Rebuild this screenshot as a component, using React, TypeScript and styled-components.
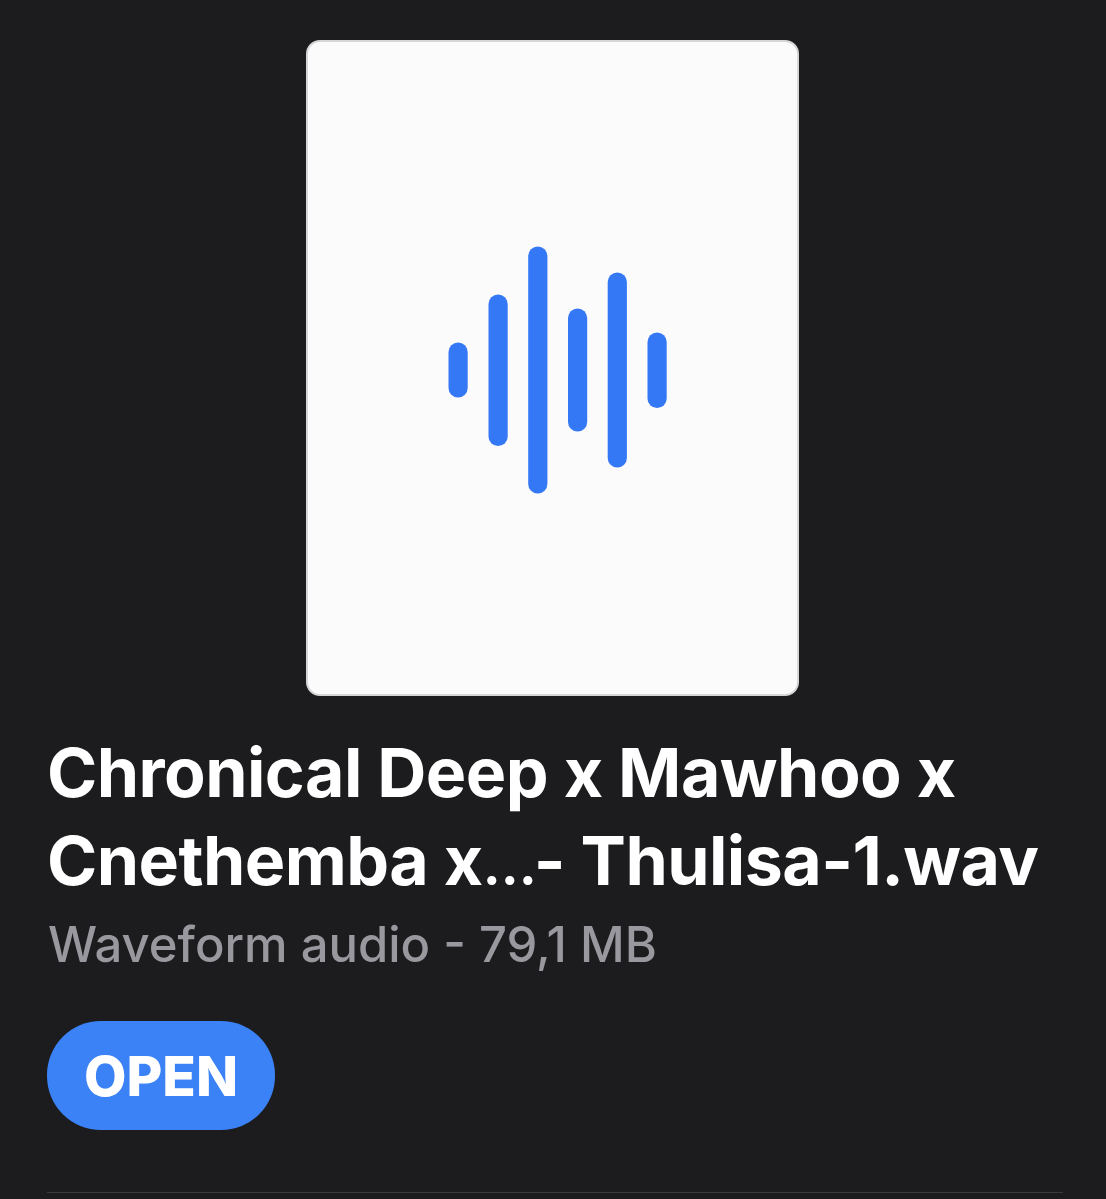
import React from "react";
import styled, { createGlobalStyle } from "styled-components";

const Global = createGlobalStyle`
  html, body { margin: 0; padding: 0; background: #1c1c1e; }
  body { font-family: Inter, "Liberation Sans", sans-serif; }
`;

const Page = styled.main`
  width: 1106px;
  height: 1199px;
  overflow: hidden;
  box-sizing: border-box;
  padding: 40px 43px 0 47px;
  display: flex;
  flex-direction: column;
`;

const Preview = styled.div`
  align-self: flex-start;
  margin-left: 259px;
  width: 493px;
  height: 656px;
  box-sizing: border-box;
  padding: 3px 0 0 8px;
  background: #fbfbfc;
  border: 2px solid #d6d6d8;
  border-radius: 14px;
  display: flex;
  align-items: center;
  justify-content: center;
`;

const Title = styled.h1`
  margin: 32px 0 0 0;
  font-size: 68px;
  line-height: 88px;
  font-weight: 700;
  color: #ffffff;
  letter-spacing: -0.55px;
  white-space: nowrap;
`;

const Ellipsis = styled.span`
  font-size: 54px;
  line-height: 0;
  letter-spacing: -3px;
`;

const Meta = styled.p`
  margin: 12px 0 0 1px;
  font-size: 49px;
  line-height: 58px;
  font-weight: 500;
  color: #98989e;
`;

const OpenButton = styled.button`
  align-self: flex-start;
  margin-top: 47px;
  width: 228px;
  height: 109px;
  border: 0;
  padding: 0;
  border-radius: 54px;
  background: #3b82f6;
  color: #fff;
  font-family: inherit;
  font-size: 55px;
  font-weight: 800;
`;

const Divider = styled.hr`
  margin: 62px 0 0 0;
  border: 0;
  height: 1px;
  background: #3a3a3c;
`;

const bars = [
  { x: 448.5, y: 342, h: 55 },
  { x: 488.5, y: 294, h: 151.5 },
  { x: 528.2, y: 246, h: 247 },
  { x: 568, y: 308, h: 123 },
  { x: 607.7, y: 272, h: 195 },
  { x: 647.5, y: 332, h: 75.5 },
];

function Waveform() {
  return (
    <svg width="220" height="248" viewBox="447 245.5 220 248" fill="#3478f6" aria-hidden="true">
      {bars.map((b) => (
        <rect key={b.x} x={b.x} y={b.y} width="19.2" height={b.h} rx="9.6" />
      ))}
    </svg>
  );
}

export default function App() {
  return (
    <>
      <Global />
      <Page>
        <Preview>
          <Waveform />
        </Preview>
        <Title>
          Chronical Deep x Mawhoo x
          <br />
          Cnethemba x<Ellipsis>…</Ellipsis>- Thulisa-1.wav
        </Title>
        <Meta>Waveform audio - 79,1 MB</Meta>
        <OpenButton>OPEN</OpenButton>
        <Divider />
      </Page>
    </>
  );
}
